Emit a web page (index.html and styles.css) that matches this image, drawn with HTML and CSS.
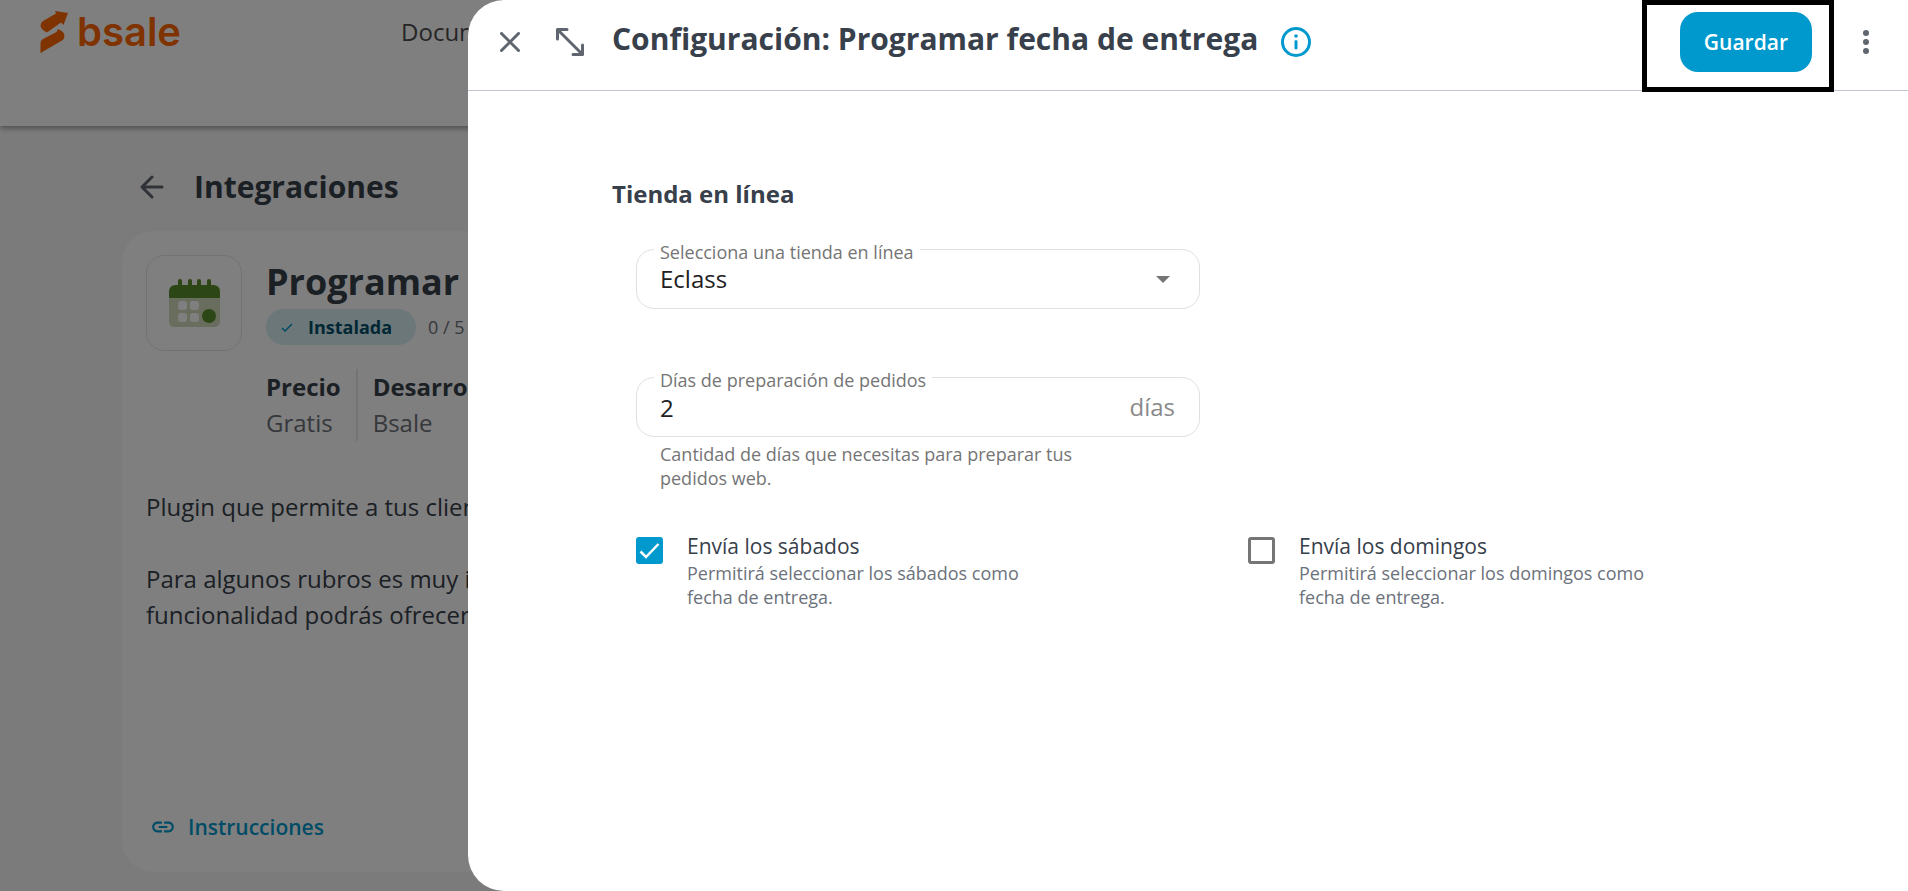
FILE: index.html
```html
<!DOCTYPE html>
<html lang="es">
<head>
  <meta charset="UTF-8">
  <meta name="viewport" content="width=device-width, initial-scale=1.0">
  <title>Programar fecha de entrega - Bsale</title>
  <link rel="stylesheet" href="styles.css">
</head>
<body>

  <div class="page">
    <header class="topbar">
      <a href="#" class="logo">
        <svg width="28" height="42" viewBox="0 0 28 42" aria-hidden="true">
          <path d="M15 0 L28 2 L23.500 14 L21 11.500 L7 21.500 Q1 18.500 .5 15 Q.5 11.500 3 10 L16 2.500 Z"/>
          <path d="M18 18 Q24.500 20.500 24.500 25 Q24.500 28 22 29.500 L.5 42 L.5 32 Q.5 29.500 3 28 L16.500 21 Z"/>
        </svg>
        <span>bsale</span>
      </a>
      <nav class="menu">
        <a href="#">Documentos</a>
      </nav>
    </header>

    <main class="content">
      <div class="page-title">
        <button type="button" class="btn-icon" aria-label="Volver">
          <svg width="24" height="24" viewBox="0 0 24 24" class="stroke" aria-hidden="true">
            <path d="M12 2 L2 12 L12 22 M2 12 H22"/>
          </svg>
        </button>
        <h1>Integraciones</h1>
      </div>

      <section class="card">
        <div class="plugin">
          <div class="plugin-icon">
            <svg width="51" height="48" viewBox="0 0 51 48" aria-hidden="true">
              <path fill="#d2dbbd" d="M0 19 H51 V42 Q51 48 45 48 H6 Q0 48 0 42 Z"/>
              <path fill="#588c2c" d="M0 19 V13 Q0 6 7 6 H44 Q51 6 51 13 V19 Z"/>
              <g fill="#588c2c">
                <rect x="9" y="0" width="4" height="10" rx="2"/>
                <rect x="19" y="0" width="4" height="10" rx="2"/>
                <rect x="28" y="0" width="4" height="10" rx="2"/>
                <rect x="38" y="0" width="4" height="10" rx="2"/>
              </g>
              <g fill="#fff">
                <rect x="9" y="22" width="9" height="9" rx="3"/>
                <rect x="21" y="22" width="9" height="9" rx="3"/>
                <rect x="9" y="34" width="9" height="9" rx="3"/>
                <rect x="21" y="34" width="9" height="9" rx="3"/>
              </g>
              <circle cx="40" cy="37" r="7" fill="#588c2c"/>
            </svg>
          </div>
          <div class="plugin-info">
            <h2>Programar fecha</h2>
            <div class="status">
              <span class="chip">
                <svg width="12" height="9" viewBox="0 0 12 9" aria-hidden="true">
                  <path d="M1 5 L4 8 L11 1" fill="none" stroke="#0099ce" stroke-width="1.500"/>
                </svg>
                Instalada
              </span>
              <span class="rating">0 / 5</span>
            </div>
            <dl class="facts">
              <div>
                <dt>Precio</dt>
                <dd>Gratis</dd>
              </div>
              <div>
                <dt>Desarrollador</dt>
                <dd>Bsale</dd>
              </div>
            </dl>
          </div>
        </div>

        <div class="description">
          <p>Plugin que permite a tus clientes</p>
          <p>Para algunos rubros es muy importante<br>funcionalidad podrás ofrecer</p>
        </div>

        <a href="#" class="link">
          <svg width="26" height="26" viewBox="0 0 24 24" aria-hidden="true">
            <path fill="currentColor" d="M3.900 12c0-1.710 1.390-3.100 3.100-3.100h4V7H7c-2.760 0-5 2.240-5 5s2.240 5 5 5h4v-1.900H7c-1.710 0-3.100-1.390-3.100-3.100zM8 13h8v-2H8v2zm9-6h-4v1.900h4c1.710 0 3.100 1.390 3.100 3.100s-1.390 3.100-3.100 3.100h-4V17h4c2.760 0 5-2.240 5-5s-2.240-5-5-5z"/>
          </svg>
          Instrucciones
        </a>
      </section>
    </main>
  </div>

  <div class="overlay">
    <form class="drawer" role="dialog" aria-labelledby="drawerTitle">
      <header class="drawer-header">
        <div class="drawer-tools">
          <button type="button" class="btn-icon" aria-label="Cerrar">
            <svg width="20" height="20" viewBox="0 0 20 20" class="stroke" aria-hidden="true">
              <path d="M1.500 1.500 L18.500 18.500 M18.500 1.500 L1.500 18.500"/>
            </svg>
          </button>
          <button type="button" class="btn-icon" aria-label="Expandir">
            <svg width="28" height="28" viewBox="0 0 28 28" class="stroke" aria-hidden="true">
              <path d="M1.500 11 V1.500 H11 M1.500 1.500 L26.500 26.500 M26.500 17 V26.500 H17"/>
            </svg>
          </button>
        </div>
        <h2 id="drawerTitle">Configuración: Programar fecha de entrega</h2>
        <button type="button" class="btn-icon btn-info" aria-label="Información">
          <svg width="30" height="30" viewBox="0 0 30 30" fill="none" stroke="currentColor" aria-hidden="true">
            <circle cx="15" cy="15" r="13.500" stroke-width="3"/>
            <path d="M15 14.500 V21" stroke-width="3" stroke-linecap="round"/>
            <circle cx="15" cy="9" r="1.800" fill="currentColor" stroke="none"/>
          </svg>
        </button>
        <div class="save">
          <button type="submit" class="btn-save">Guardar</button>
        </div>
        <button type="button" class="btn-icon" aria-label="Más opciones">
          <svg width="6" height="24" viewBox="0 0 6 24" fill="currentColor" aria-hidden="true">
            <circle cx="3" cy="3" r="3"/>
            <circle cx="3" cy="12" r="3"/>
            <circle cx="3" cy="21" r="3"/>
          </svg>
        </button>
      </header>

      <div class="drawer-body">
        <h3>Tienda en línea</h3>

        <div class="row">
          <div class="field">
            <label for="store">Selecciona una tienda en línea</label>
            <div class="control">
              <select id="store" name="store">
                <option selected>Eclass</option>
              </select>
              <span class="arrow"></span>
            </div>
          </div>
        </div>

        <div class="row">
          <div class="field">
            <label for="days">Días de preparación de pedidos</label>
            <div class="control">
              <input type="text" inputmode="numeric" id="days" name="days" value="2" aria-describedby="daysHint">
              <span class="suffix">días</span>
            </div>
            <p class="hint" id="daysHint">Cantidad de días que necesitas para preparar tus pedidos web.</p>
          </div>
        </div>

        <div class="row row-checks">
          <div class="check">
            <input type="checkbox" id="saturday" name="saturday" aria-describedby="saturdayHint" checked>
            <div class="check-text">
              <label for="saturday">Envía los sábados</label>
              <p id="saturdayHint">Permitirá seleccionar los sábados como fecha de entrega.</p>
            </div>
          </div>

          <div class="check">
            <input type="checkbox" id="sunday" name="sunday" aria-describedby="sundayHint">
            <div class="check-text">
              <label for="sunday">Envía los domingos</label>
              <p id="sundayHint">Permitirá seleccionar los domingos como fecha de entrega.</p>
            </div>
          </div>
        </div>
      </div>
    </form>
  </div>

</body>
</html>
```

FILE: styles.css
```css
* {
  box-sizing: border-box;
}

body {
  margin: 0;
  font-family: "Open Sans", "Noto Sans", sans-serif;
  font-size: 24px;
  line-height: 36px;
  color: #37404b;
  background: #f7f7f7;
  overflow: hidden;
}

h1, h2, h3, p, dl, dd {
  margin: 0;
}

a {
  text-decoration: none;
}

svg {
  display: block;
  flex: none;
}

button, input, select {
  font: inherit;
}

.btn-icon {
  display: flex;
  align-items: center;
  justify-content: center;
  padding: 0;
  border: none;
  background: none;
  color: #5f6670;
  cursor: pointer;
}

.stroke {
  fill: none;
  stroke: currentColor;
  stroke-width: 3px;
  stroke-linecap: round;
  stroke-linejoin: round;
}

/* Page behind the drawer */

.page {
  display: flex;
  flex-direction: column;
  height: 100vh;
}

.topbar {
  display: flex;
  align-items: flex-start;
  gap: 220px;
  height: 126px;
  padding: 11px 40px;
  background: #fff;
  box-shadow: 0 2px 6px rgba(0, 0, 0, 0.4);
}

.logo {
  display: flex;
  align-items: center;
  gap: 9px;
  color: #ff6600;
  font-family: Inter, sans-serif;
  font-size: 40px;
  font-weight: 600;
  line-height: 42px;
}

.logo svg {
  fill: #ff6600;
}

.menu a {
  color: #4d4d4d;
  font-weight: 500;
  line-height: 42px;
}

.content {
  flex: 1;
  display: flex;
  flex-direction: column;
  gap: 20px;
  padding: 37px 122px 19px;
}

.page-title {
  display: flex;
  align-items: center;
  gap: 30px;
  padding-left: 18px;
}

.page-title h1 {
  font-size: 30px;
  line-height: 48px;
}

.card {
  flex: 1;
  display: flex;
  flex-direction: column;
  align-items: flex-start;
  padding: 24px 24px 30px;
  border-radius: 32px;
  background: #fff;
}

.plugin {
  display: flex;
  gap: 24px;
}

.plugin-icon {
  display: flex;
  align-items: center;
  justify-content: center;
  width: 96px;
  height: 96px;
  border: 1px solid #e4e4e4;
  border-radius: 18px;
}

.plugin-info h2 {
  font-size: 36px;
  line-height: 54px;
}

.status {
  display: flex;
  gap: 12px;
  font-size: 18px;
}

.chip {
  display: flex;
  align-items: center;
  gap: 15px;
  padding: 0 24px 0 15px;
  border-radius: 18px;
  background: #d9eef5;
  color: #004e68;
  font-weight: 700;
}

.rating {
  color: #6c7077;
}

.facts {
  display: flex;
  margin-top: 24px;
}

.facts div + div {
  margin-left: 15px;
  padding-left: 15px;
  border-left: 2px solid #e8e8e8;
}

.facts dt {
  font-weight: 700;
}

.facts dd {
  color: #6c7077;
}

.description {
  display: flex;
  flex-direction: column;
  gap: 36px;
  margin-top: 48px;
}

.link {
  display: flex;
  align-items: center;
  gap: 12px;
  margin-top: auto;
  padding-left: 4px;
  color: #0099ce;
  font-size: 21px;
  font-weight: 600;
  line-height: 30px;
}

/* Drawer */

.overlay {
  position: fixed;
  inset: 0;
  display: flex;
  justify-content: flex-end;
  background: rgba(0, 0, 0, 0.5);
}

.drawer {
  width: 100%;
  max-width: 1440px;
  border-radius: 36px 0 0 36px;
  background: #fff;
}

.drawer-header {
  display: flex;
  align-items: center;
  height: 91px;
  padding: 0 39px 6px 32px;
  border-bottom: 1px solid #c3c3d3;
}

.drawer-tools {
  display: flex;
  align-items: center;
  gap: 36px;
  width: 112px;
}

.drawer-header h2 {
  font-size: 30px;
  line-height: 42px;
  padding-bottom: 6px;
}

.drawer-header .btn-info {
  margin-left: 23px;
  color: #0099ce;
}

.save {
  position: relative;
  margin-left: auto;
  margin-right: 51px;
}

/* Frame that points at the save button */
.save::after {
  content: "";
  position: absolute;
  inset: -12px -22px -20px -38px;
  border: 5px solid #000;
  pointer-events: none;
}

.btn-save {
  display: block;
  height: 60px;
  padding: 0 24px;
  border: none;
  border-radius: 18px;
  background: #0099ce;
  color: #fff;
  font-size: 21px;
  font-weight: 600;
  cursor: pointer;
}

.drawer-body {
  padding: 85px 72px 48px 144px;
}

.drawer-body h3 {
  font-size: 24px;
  line-height: 36px;
  margin-bottom: 37px;
}

.row {
  display: grid;
  grid-template-columns: 1fr 1fr;
  column-gap: 48px;
  margin-bottom: 68px;
  padding: 0 24px;
}

.row-checks {
  margin-top: -27px;
}

.field {
  position: relative;
}

.field label {
  position: absolute;
  top: -9px;
  left: 18px;
  padding: 0 6px;
  background: #fff;
  color: #757575;
  font-size: 18px;
  line-height: 24px;
}

.control {
  display: flex;
  align-items: center;
  height: 60px;
  padding: 0 24px 0 23px;
  border: 1px solid #e0e0e0;
  border-radius: 18px;
}

.control input, .control select {
  flex: 1;
  min-width: 0;
  height: 58px;
  padding: 0;
  border: none;
  outline: none;
  background: none;
  color: #212121;
  appearance: none;
}

.arrow {
  margin-right: 5px;
  border: 7px solid transparent;
  border-top-color: #757575;
  border-bottom: none;
}

.suffix {
  color: #8a8a8a;
}

.hint {
  max-width: 480px;
  margin-top: 5px;
  padding-left: 24px;
  color: #757575;
  font-size: 18px;
  line-height: 24px;
}

.check {
  display: flex;
  gap: 24px;
}

.check input {
  flex: none;
  appearance: none;
  width: 27px;
  height: 27px;
  margin: 6px 0 0;
  border: 3px solid #757575;
  border-radius: 3px;
  cursor: pointer;
}

.check input:checked {
  border-color: #0099ce;
  background: #0099ce url("data:image/svg+xml,%3Csvg xmlns='http://www.w3.org/2000/svg' viewBox='0 0 21 21'%3E%3Cpath d='M1.500 11.500 L7 17 L19.500 4' fill='none' stroke='%23fff' stroke-width='2.500'/%3E%3C/svg%3E") center / 21px no-repeat;
}

.check-text {
  max-width: 360px;
}

.check label {
  display: block;
  font-size: 21px;
  line-height: 30px;
}

.check p {
  color: #6c727b;
  font-size: 18px;
  line-height: 24px;
}
```
